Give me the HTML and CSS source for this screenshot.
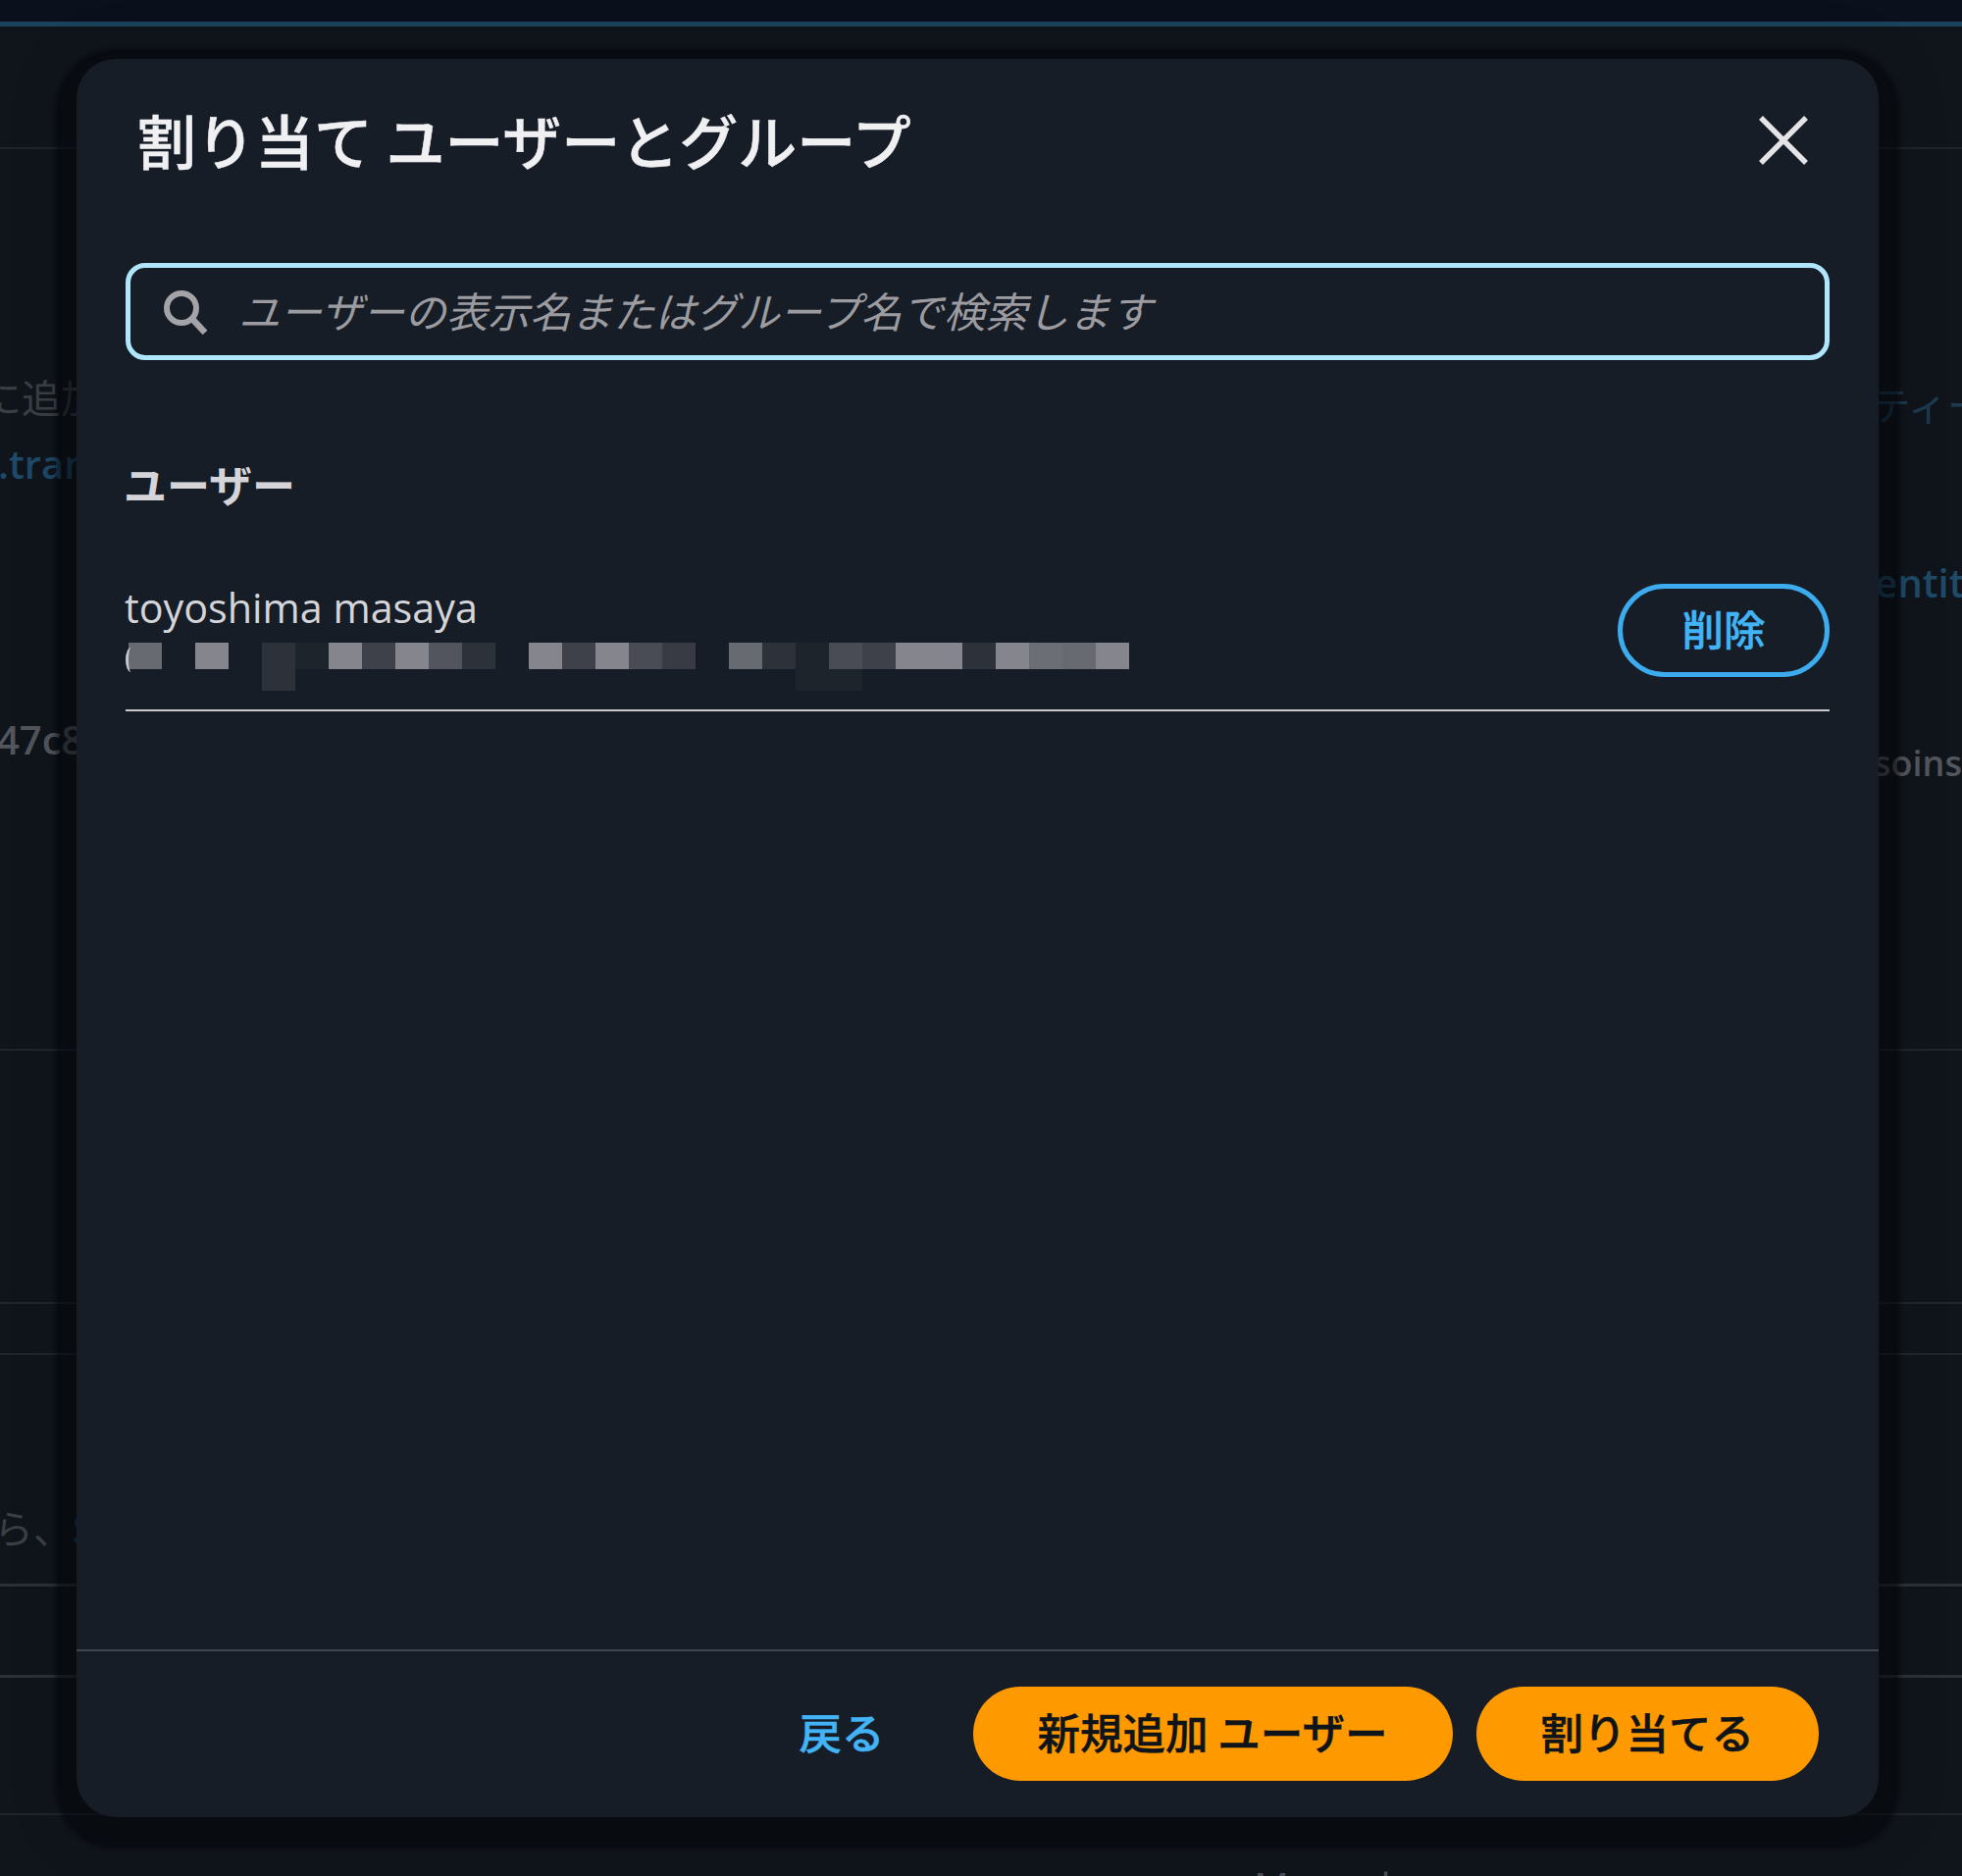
FILE: index.html
```html
<!DOCTYPE html>
<html lang="ja">
<head>
<meta charset="utf-8">
<title>割り当て ユーザーとグループ</title>
<link rel="stylesheet" href="styles.css">
</head>
<body>
<div class="page">
  <div class="topbar"></div>
  <div class="band band-head"></div>
  <div class="band band-main">
    <div class="bg-row row-a"><span class="bg-text gray cut-left">に追加</span><span class="bg-text blue-dim">ティー</span></div>
    <div class="bg-row row-b"><span class="bg-text blue cut-left-b">.tran</span></div>
    <div class="bg-row row-c"><span class="bg-text blue right-only">entity</span></div>
    <div class="bg-row row-d"><span class="bg-text gray-strong cut-left-c">47c8</span><span class="bg-text gray-strong soins">soins</span></div>
  </div>
  <div class="band band-short"></div>
  <div class="band band-thin"></div>
  <div class="band band-form">
    <div class="bg-row row-e"><span class="bg-text gray cut-left-d">ら、<span class="blue">S</span></span></div>
  </div>
  <div class="band band-field"></div>
  <div class="band band-last"></div>
  <div class="bottom-text">Manual</div>
</div>

<div class="modal" role="dialog" aria-labelledby="modal-title">
  <header class="modal-head">
    <h2 class="modal-title" id="modal-title">割り当て ユーザーとグループ</h2>
    <button class="close" aria-label="閉じる">
      <svg viewBox="0 0 50 50" width="50" height="50"><path d="M2 2 L48 48 M48 2 L2 48" fill="none" stroke="#e4e4e6" stroke-width="5.5"/></svg>
    </button>
  </header>

  <div class="search">
    <svg class="search-icon" viewBox="0 0 46 46" width="46" height="46"><circle cx="19" cy="19" r="15" fill="none" stroke="#a3a3a8" stroke-width="6"/><path d="M30 30 L43 44" fill="none" stroke="#a3a3a8" stroke-width="6.5"/></svg>
    <span class="placeholder">ユーザーの表示名またはグループ名で検索します</span>
  </div>

  <h3 class="section-label">ユーザー</h3>

  <div class="user-row">
    <div class="user-info">
      <div class="user-name">toyoshima masaya</div>
      <div class="mosaic" aria-hidden="true">
        <i class="c g3"></i><i class="c"></i><i class="c g5"></i><i class="c"></i><i class="c g1 tall"></i><i class="c g0"></i>
        <i class="c g5"></i><i class="c g2"></i><i class="c g5"></i><i class="c g3b"></i><i class="c g1"></i><i class="c"></i>
        <i class="c g5"></i><i class="c g2"></i><i class="c g5"></i><i class="c g2b"></i><i class="c g1b"></i><i class="c"></i>
        <i class="c g3"></i><i class="c g1"></i><i class="c g0 tall-dim"></i><i class="c g2b tall-dim"></i><i class="c g2"></i><i class="c g5"></i>
        <i class="c g5"></i><i class="c g1"></i><i class="c g5"></i><i class="c g4"></i><i class="c g3"></i><i class="c g5"></i>
      </div>
    </div>
    <button class="btn-outline">削除</button>
  </div>

  <footer class="modal-foot">
    <button class="btn-link">戻る</button>
    <button class="btn-primary">新規追加 ユーザー</button>
    <button class="btn-primary">割り当てる</button>
  </footer>
</div>
</body>
</html>
```

FILE: styles.css
```css
* { box-sizing: border-box; }
html, body { margin: 0; padding: 0; height: 1912px; background: #10151c; overflow: hidden; }
body { font-family: "Noto Sans CJK JP", "Noto Sans", sans-serif; position: relative; }

.page { height: 1912px; overflow: hidden; position: relative; }
.topbar { height: 27px; background: #0a111c; border-bottom: 5px solid #1d435c; }
.band { border-bottom: 2px solid #1f252d; display: flow-root; }
.band-head { height: 125px; }
.band-main { height: 919px; }
.band-short { height: 258px; }
.band-thin { height: 52px; }
.band-form { height: 236px; border-bottom: 3px solid #2c3138; }
.band-field { height: 93px; border-bottom: 3px solid #2c3138; }
.band-last { height: 140px; }

.bg-row { display: flex; justify-content: space-between; align-items: flex-start; white-space: nowrap; }
.bg-text { font-size: 40px; line-height: 44px; }
.row-a { margin-top: 230px; }
.row-b { margin-top: 18px; }
.row-c { margin-top: 77px; justify-content: flex-end; }
.row-d { margin-top: 116px; }
.row-e { margin-top: 153px; }
.gray { color: #3b3f45; }
.gray-strong { color: #53565c; font-family: "Open Sans", sans-serif; font-weight: 600; }
.blue { color: #1f4a68; font-family: "Open Sans", sans-serif; font-weight: 600; }
.blue-dim { color: #1c3a50; margin: 7px -25px 0 auto; }
.soins { font-size: 36px; margin-top: 24px; }
.cut-left { margin-left: -18px; }
.cut-left-b { margin-left: -2px; }
.cut-left-c { margin-left: -3px; }
.cut-left-d { margin-left: -6px; }
.right-only { margin-right: -24px; }
.bottom-text { position: absolute; left: 1278px; top: 1901px; color: #4c4f55; font-family: "Open Sans", sans-serif; font-size: 40px; line-height: 44px; }

.modal {
  position: absolute; left: 78px; top: 60px; width: 1837px; height: 1792px;
  background: #161d26; border-radius: 40px; color: #e9e9ec;
  display: flex; flex-direction: column;
  box-shadow: 0 11px 4px 21px rgba(2, 4, 8, .5), 0 10px 50px 24px rgba(4, 6, 10, .12);
}

.modal-head { height: 208px; padding: 52px 72px 0 62px; display: flex; justify-content: space-between; align-items: flex-start; flex: none; }
.modal-title { margin: 0; font-size: 60px; line-height: 60px; font-weight: 500; color: #f0f0f3; -webkit-text-stroke: .5px #f0f0f3; }
.close { width: 50px; height: 50px; padding: 0; margin-top: 6px; border: 0; background: none; display: block; }
.close svg { display: block; }

.search {
  height: 99px; margin: 0 50px; flex: none;
  border: 5px solid #b0e6fc; border-radius: 20px;
  display: flex; align-items: center; gap: 31px; padding-left: 33px;
}
.search-icon { flex: none; }
.placeholder { font-size: 42.5px; font-style: italic; color: #9b9ba0; white-space: nowrap; margin-top: -4px; }

.section-label { margin: 101px 0 0 48px; font-size: 44px; line-height: 50px; font-weight: 700; color: #d5d5d9; flex: none; }

.user-row {
  margin: 77px 50px 0; padding-bottom: 33px; flex: none;
  border-bottom: 2px solid #c9c9cd;
  display: flex; justify-content: space-between; align-items: flex-start;
}
.user-name { font-family: "Open Sans", sans-serif; font-size: 41.3px; line-height: 50px; font-weight: 500; color: #d5d5d9; margin-top: -1px; margin-left: -1px; }
.mosaic { display: grid; grid-template-columns: repeat(30, 34px); grid-template-rows: 27px 22px; margin: 11px 0 -21px 3px; position: relative; }
.mosaic::before { content: ""; position: absolute; left: -3px; top: 5px; width: 8px; height: 25px; border-left: 3px solid #c8c8cc; border-radius: 50%; }
.c { display: block; height: 27px; }
.tall { height: 49px; }
.tall-dim { height: 49px; background: #1e242b; }
.g0 { background: #1e242b; }
.g1 { background: #2d3139; }
.g1b { background: #383b43; }
.g2 { background: #3e4149; }
.g2b { background: #494c54; }
.g3 { background: #686a71; }
.g3b { background: #52555d; }
.g4 { background: #6b6e74; }
.g5 { background: #85858d; }
.tall-dim.g2b { background: linear-gradient(#494c54 0 27px, #1e242b 27px); }
.tall-dim.g0 { background: #1e242b; }

.btn-outline {
  width: 216px; height: 95px; border: 5px solid #3cacef; border-radius: 48px;
  background: none; color: #42b4f5; font: 500 42.5px/1 "Noto Sans CJK JP", sans-serif; -webkit-text-stroke: .5px #42b4f5; padding: 0 0 4px; flex: none;
}

.modal-foot {
  margin-top: auto; height: 171px; flex: none;
  border-top: 2px solid #414750;
  display: flex; justify-content: flex-end; align-items: flex-start;
  padding: 36px 61px 0 0;
}
.btn-link { background: none; border: 0; padding: 0 0 4px; margin-right: 90px; height: 96px; color: #42b4f5; font: 500 43.5px/1 "Noto Sans CJK JP", sans-serif; -webkit-text-stroke: .5px #42b4f5; }
.btn-primary {
  height: 96px; padding: 0 66px 4px; border: 0; border-radius: 48px;
  background: #ff9900; color: #0f141a; font: 500 43.5px/1 "Noto Sans CJK JP", sans-serif; -webkit-text-stroke: .5px #0f141a; white-space: nowrap;
}
.btn-primary + .btn-primary { margin-left: 24px; }
```
